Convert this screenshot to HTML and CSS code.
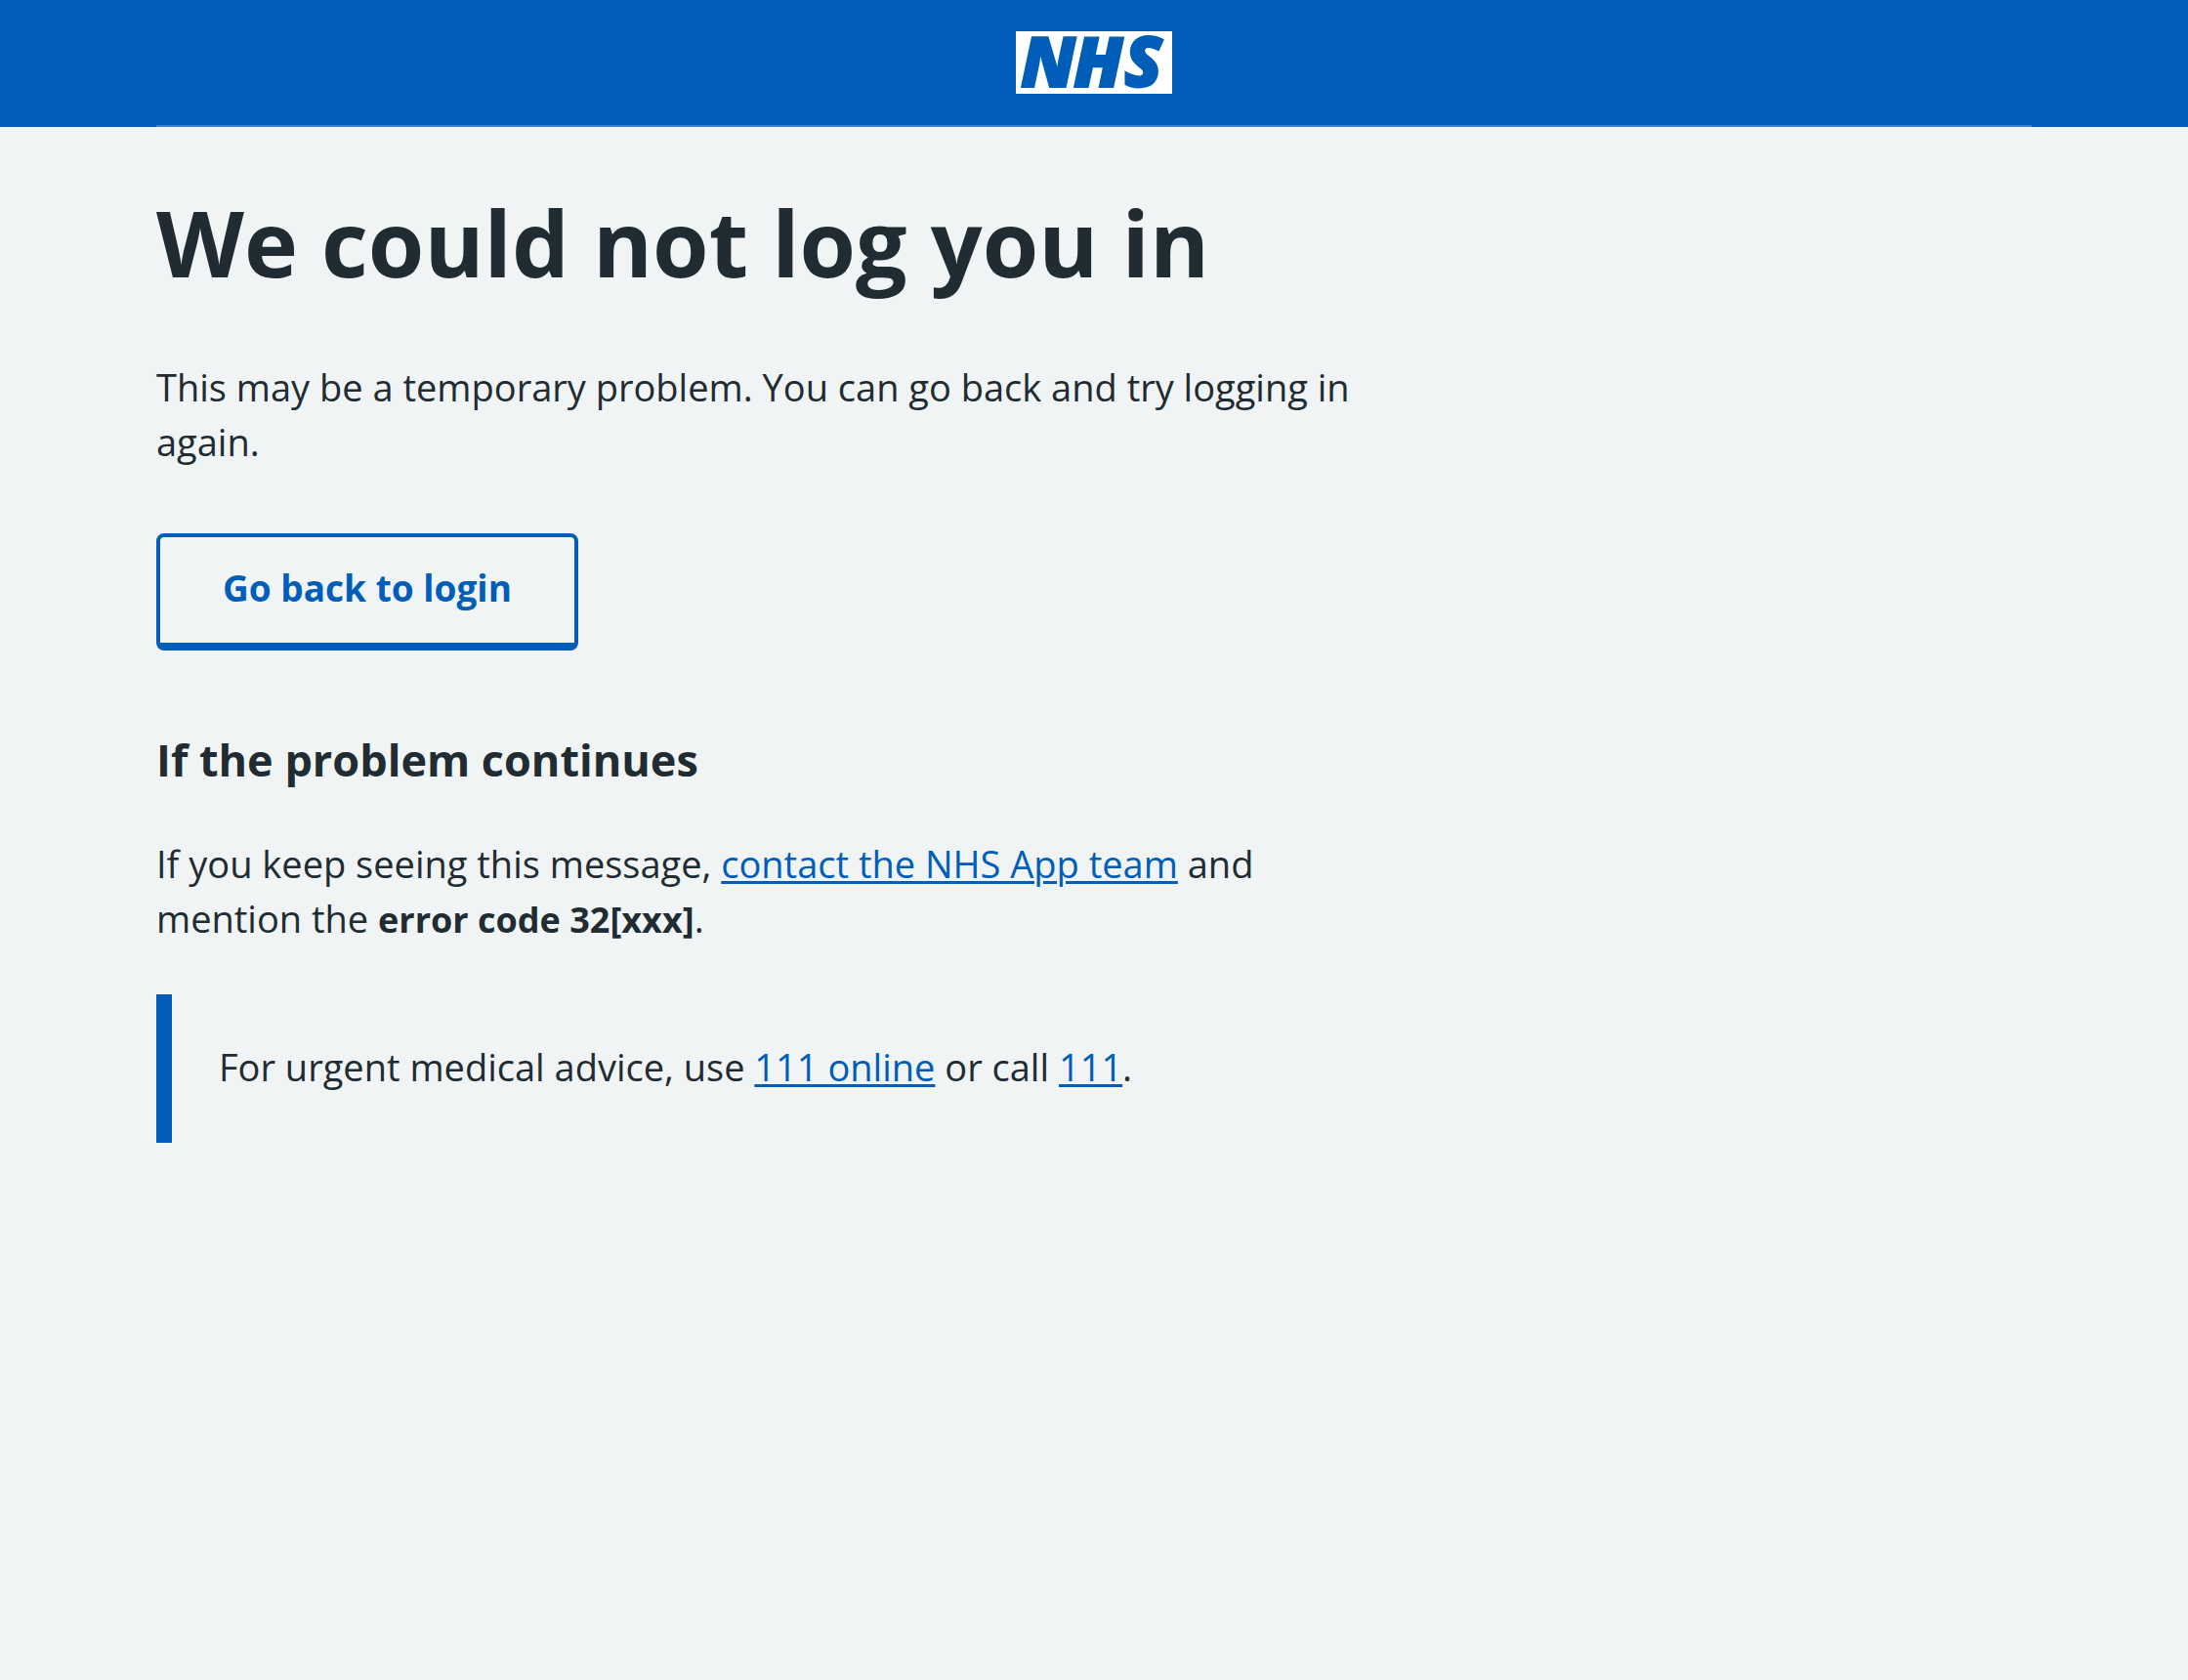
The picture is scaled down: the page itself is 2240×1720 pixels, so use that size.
FILE: index.html
```html
<!DOCTYPE html>
<html lang="en">
<head>
<meta charset="utf-8">
<meta name="viewport" content="width=device-width, initial-scale=1">
<title>We could not log you in - NHS</title>
<link rel="stylesheet" href="styles.css">
</head>
<body>
<header class="header">
  <div class="header-inner">
    <svg class="logo" viewBox="0 0 160 64" role="img" aria-label="NHS">
      <rect width="160" height="64" fill="#fff"/>
      <text class="logo-text" x="5 59 111" y="57">NHS</text>
    </svg>
  </div>
</header>
<main class="main">
  <div class="column">
    <h1 class="title">We could not log you in</h1>
    <p class="text">This may be a temporary problem. You can go back and try logging in again.</p>
    <button class="button" type="button">Go back to login</button>
    <h2 class="subtitle">If the problem continues</h2>
    <p class="text">If you keep seeing this message, <a class="link" href="#contact">contact the NHS App team</a> and mention the <strong>error code 32[xxx]</strong>.</p>
    <div class="inset">
      <p class="text">For urgent medical advice, use <a class="link" href="#111-online">111 online</a> or call <a class="link" href="tel:111">111</a>.</p>
    </div>
  </div>
</main>
</body>
</html>
```
FILE: styles.css
```css
* {
  box-sizing: border-box;
}

body {
  margin: 0;
  background: #f0f4f5;
  color: #212b32;
  font-family: "Open Sans", "Noto Sans", sans-serif;
  font-size: 38px;
  font-weight: 500;
  line-height: 56px;
}

.header {
  padding: 0 160px;
  background: #005eb8;
}

.header-inner {
  display: flex;
  justify-content: center;
  padding: 32px 0;
  border-bottom: 2px solid #407ec9;
}

.logo {
  display: block;
  width: 160px;
  height: 64px;
  overflow: visible;
}

.logo-text {
  fill: #005eb8;
  stroke: #005eb8;
  stroke-width: 2px;
  font-family: "Open Sans", sans-serif;
  font-size: 71px;
  font-style: italic;
  font-weight: 800;
}

.main {
  padding: 62px 160px;
}

.column {
  max-width: 1248px;
}

.title {
  margin: 0 0 64px;
  font-size: 93px;
  font-weight: 700;
  line-height: 112px;
}

.text {
  margin: 0 0 50px;
}

.button {
  display: block;
  margin: 66px 0 80px;
  padding: 24px 64px 28px;
  border: 4px solid #005eb8;
  border-bottom-width: 8px;
  border-radius: 8px;
  background: transparent;
  color: #005eb8;
  font: inherit;
  font-size: 37px;
  font-weight: 700;
}

.subtitle {
  margin: 0 0 46px;
  font-size: 45px;
  font-weight: 700;
  line-height: 64px;
}

.link {
  color: #005eb8;
  text-decoration-thickness: 3px;
  text-underline-offset: 3px;
}

.inset {
  padding: 46px 48px 50px;
  border-left: 16px solid #005eb8;
}

.inset .text {
  margin: 0;
}

strong {
  font-size: 36px;
  font-weight: 700;
  line-height: 1;
}
```
